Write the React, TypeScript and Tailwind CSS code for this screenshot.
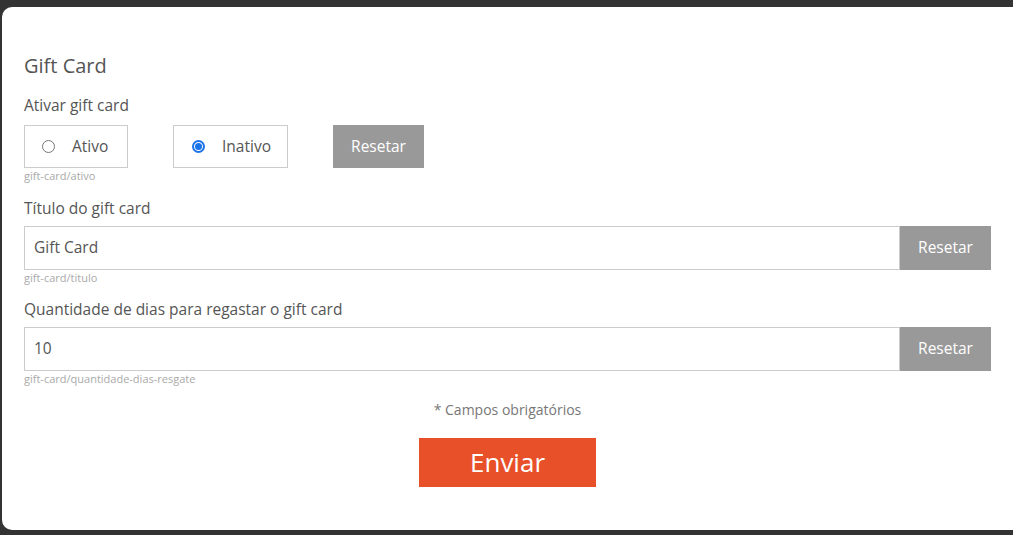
import { useState } from "react"

const font = { fontFamily: "'Open Sans', 'Noto Sans', sans-serif" }

function ResetButton({ className = "" }: { className?: string }) {
  return (
    <button className={`bg-[#999999] text-white text-[15.5px] ${className}`}>Resetar</button>
  )
}

function Radio({ checked, label, onClick, className = "" }: { checked: boolean; label: string; onClick: () => void; className?: string }) {
  return (
    <label
      onClick={onClick}
      className={`flex items-center h-[43px] border border-[#cccccc] cursor-pointer ${className}`}
    >
      <span
        className={`w-[13px] h-[13px] rounded-full flex items-center justify-center ${
          checked ? "border-2 border-[#1a73e8]" : "border border-[#767676]"
        }`}
      >
        {checked && <span className="w-[7px] h-[7px] rounded-full bg-[#1a73e8]" />}
      </span>
      <span className="ml-[17px] text-[15.5px] text-[#555555]">{label}</span>
    </label>
  )
}

export default function App() {
  const [ativo, setAtivo] = useState(false)
  const [titulo, setTitulo] = useState("Gift Card")
  const [dias, setDias] = useState("10")

  return (
    <div className="w-[1013px] h-[535px] bg-[#333333] pt-[7px] pl-[2px] overflow-hidden" style={font}>
      <div className="bg-white rounded-[10px] w-[1020px] h-[523px] pl-[22px] pr-[31px] pt-[43px]">
        <h2 className="text-[20px] text-[#555555] leading-[32px]">Gift Card</h2>

        {/* Ativar */}
        <div className="mt-[13px] text-[15.5px] text-[#555555] leading-[20px]">Ativar gift card</div>
        <div className="flex mt-[10px]">
          <Radio checked={ativo} label="Ativo" onClick={() => setAtivo(true)} className="w-[104px] pl-[17px]" />
          <Radio checked={!ativo} label="Inativo" onClick={() => setAtivo(false)} className="w-[115px] pl-[18px] ml-[45px]" />
          <ResetButton className="w-[91px] h-[43px] ml-[45px]" />
        </div>
        <div className="text-[11px] text-[#aaaaaa] leading-[14px] mt-[1px]">gift-card/ativo</div>

        {/* Titulo */}
        <div className="mt-[15px] text-[15.5px] text-[#555555] leading-[20px]">Título do gift card</div>
        <div className="flex mt-[8px] h-[44px]">
          <input
            value={titulo}
            onChange={(e) => setTitulo(e.target.value)}
            className="flex-1 border border-[#cccccc] px-[9px] text-[15.5px] text-[#555555] outline-none"
          />
          <ResetButton className="w-[91px]" />
        </div>
        <div className="text-[11px] text-[#aaaaaa] leading-[14px] mt-[1px]">gift-card/titulo</div>

        {/* Dias */}
        <div className="mt-[14px] text-[15.5px] text-[#555555] leading-[20px]">Quantidade de dias para regastar o gift card</div>
        <div className="flex mt-[8px] h-[44px]">
          <input
            value={dias}
            onChange={(e) => setDias(e.target.value)}
            className="flex-1 border border-[#cccccc] px-[9px] text-[15.5px] text-[#555555] outline-none"
          />
          <ResetButton className="w-[91px]" />
        </div>
        <div className="text-[11px] text-[#aaaaaa] leading-[14px] mt-[1px]">gift-card/quantidade-dias-resgate</div>

        <div className="text-center text-[14px] text-[#777777] mt-[15px] leading-[18px]">* Campos obrigatórios</div>
        <div className="flex justify-center mt-[19px]">
          <button className="w-[177px] h-[49px] bg-[#e8502a] text-white text-[26px]">Enviar</button>
        </div>
      </div>
    </div>
  )
}
